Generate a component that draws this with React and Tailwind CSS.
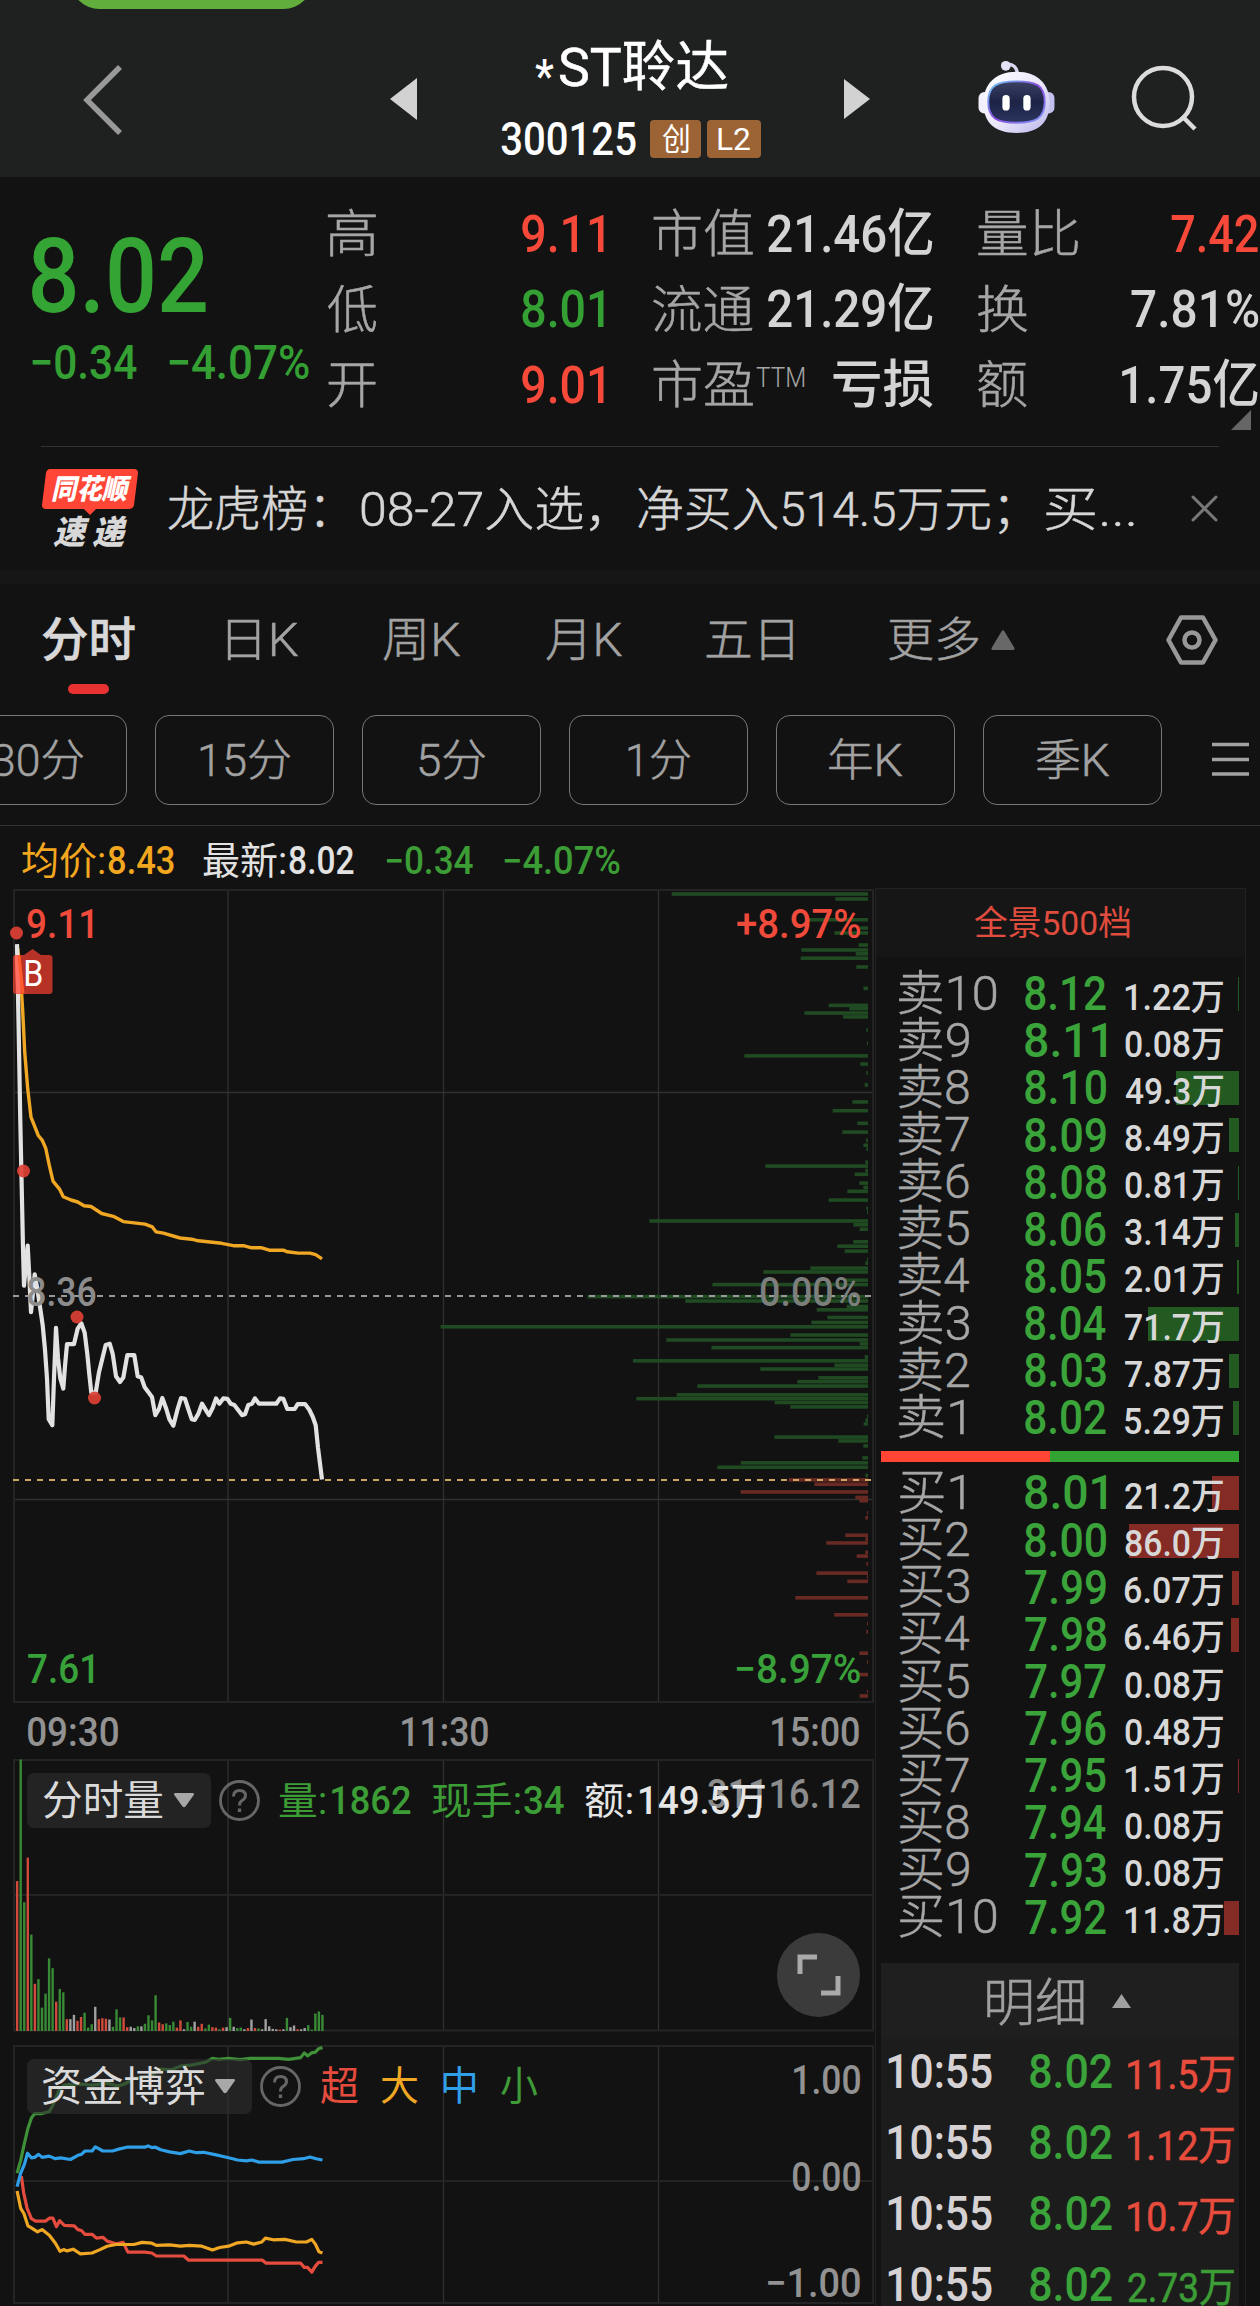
import React, { useLayoutEffect, useRef, useState } from "react";

const FONT = "font-[Roboto,'Noto_Sans_CJK_SC',sans-serif]";

/* Stretches one line of text so that its ink fills the width of its box. */
function Fit({ className = "", children }) {
  const outer = useRef(null);
  const inner = useRef(null);
  const [transform, setTransform] = useState("none");
  useLayoutEffect(() => {
    const cs = getComputedStyle(inner.current);
    const ctx = document.createElement("canvas").getContext("2d");
    ctx.font = `${cs.fontWeight} ${cs.fontSize} ${cs.fontFamily}`;
    const m = ctx.measureText(inner.current.textContent);
    const ink = m.actualBoundingBoxLeft + m.actualBoundingBoxRight;
    const s = outer.current.clientWidth / ink;
    setTransform(`translateX(${m.actualBoundingBoxLeft * s}px) scaleX(${s})`);
  }, [children]);
  return (
    <span ref={outer} className={`block shrink-0 leading-none ${className}`}>
      <span ref={inner} className="inline-block origin-left whitespace-nowrap leading-none align-top" style={{ transform }}>
        {children}
      </span>
    </span>
  );
}

const project = (pts, sx, sy, oy) =>
  pts.map(([x, y]) => `${(x / sx).toFixed(1)},${(y / sy + oy).toFixed(1)}`).join(" ");

/* ---------- header ---------- */

function Robot() {
  return (
    <svg className="ml-[107px] h-[74px] w-[79px] shrink-0" viewBox="0 0 80 76">
      <defs>
        <linearGradient id="shell" x1="0" y1="0" x2="1" y2="1">
          <stop offset="0" stopColor="#ffffff" />
          <stop offset="0.55" stopColor="#e9e6fa" />
          <stop offset="1" stopColor="#b9b5ea" />
        </linearGradient>
        <linearGradient id="rim" x1="0" y1="0" x2="1" y2="1">
          <stop offset="0" stopColor="#6fd0f5" />
          <stop offset="0.5" stopColor="#8a4be0" />
          <stop offset="1" stopColor="#7f9cf5" />
        </linearGradient>
        <linearGradient id="visor" x1="0" y1="0" x2="0" y2="1">
          <stop offset="0" stopColor="#3a4163" />
          <stop offset="0.5" stopColor="#1c2346" />
          <stop offset="1" stopColor="#2c3560" />
        </linearGradient>
      </defs>
      <path d="M29 6 Q40 4 41 16" fill="none" stroke="#d9d6f2" strokeWidth="3.5" />
      <circle cx="29" cy="7" r="5" fill="#e4e2f6" />
      <rect x="1" y="34" width="12" height="22" rx="6" fill="#f2f0fc" />
      <rect x="67" y="34" width="12" height="22" rx="6" fill="#c3c0ee" />
      <path d="M40 13 C62 13 74 26 74 45 C74 66 62 76 40 76 C18 76 6 66 6 45 C6 26 18 13 40 13Z" fill="url(#shell)" />
      <path d="M40 23 C60 23 69 27 69 44 C69 61 60 65.500 40 65.500 C20 65.500 11 61 11 44 C11 27 20 23 40 23Z" fill="url(#visor)" stroke="url(#rim)" strokeWidth="2" />
      <rect x="25.500" y="37" width="7.500" height="16" rx="3.700" fill="#fff" />
      <rect x="47" y="37" width="7.500" height="16" rx="3.700" fill="#fff" />
    </svg>
  );
}

function Header() {
  return (
    <header className="relative flex h-[177px] items-center overflow-hidden bg-[#1f2120]">
      <div className="absolute -top-[50px] left-[70px] h-[59px] w-[243px] rounded-full bg-[#62ae3c]" />
      <svg className="ml-[80px] mt-[22px] h-[72px] w-[45px]" viewBox="0 0 45 72" fill="none" stroke="#999" strokeWidth="5.5">
        <path d="M40 3 L7 36 L40 69" />
      </svg>
      <svg className="ml-[265px] mt-[20px] h-[42px] w-[27px]" viewBox="0 0 27 42" fill="#d2d2d2">
        <path d="M27 0V42L0 21Z" />
      </svg>
      <div className="ml-[84px] w-[260px] pt-[26px]">
        <div className="ml-[34px] flex text-[54px] text-white">
          <Fit className="mt-[11px] w-[19px] text-[47px] font-medium">*</Fit>
          <Fit className="ml-[6px] w-[168px] [-webkit-text-stroke:0.5px]">ST聆达</Fit>
        </div>
        <div className="mt-[17px] flex items-center text-white">
          <Fit className="w-[135px] text-[46px] font-medium">300125</Fit>
          <span className="ml-[14px] flex h-[38px] w-[51px] items-center justify-center rounded-[4px] bg-[#9c6334]">
            <Fit className="w-[27px] text-[31px]">创</Fit>
          </span>
          <span className="ml-[6px] flex h-[38px] w-[54px] items-center justify-center rounded-[4px] bg-[#9c6334]">
            <Fit className="w-[32px] text-[32px]">L2</Fit>
          </span>
        </div>
      </div>
      <svg className="ml-[83px] mt-[20px] h-[40px] w-[26px]" viewBox="0 0 26 40" fill="#d2d2d2">
        <path d="M0 0V40L26 20Z" />
      </svg>
      <div className="mt-[14px] flex">
        <Robot />
      </div>
      <svg className="ml-[75px] mt-[20px] h-[68px] w-[68px]" viewBox="0 0 68 68" fill="none" stroke="#dcdcdc" strokeWidth="4.5">
        <circle cx="32" cy="32" r="29" />
        <path d="M51 51L64 64" />
      </svg>
    </header>
  );
}

/* ---------- quote ---------- */

const UP = "text-[#f6493a]";
const DOWN = "text-[#34a034]";
const PLAIN = "text-[#d4d4d4]";

const QUOTE = [
  {
    box: "w-[276px]",
    rows: [
      ["高", "w-[48px]", "9.11", `w-[82px] ${UP}`],
      ["低", "w-[48px]", "8.01", `w-[82px] ${DOWN}`],
      ["开", "w-[48px]", "9.01", `w-[82px] ${UP}`],
    ],
  },
  {
    box: "ml-[49px] w-[280px]",
    rows: [
      ["市值", "w-[100px]", "21.46亿", `w-[165px] ${PLAIN}`],
      ["流通", "w-[100px]", "21.29亿", `w-[165px] ${PLAIN}`],
      ["市盈", "w-[100px]", "亏损", `w-[100px] ${PLAIN}`],
    ],
  },
  {
    box: "ml-[45px] w-[280px]",
    rows: [
      ["量比", "w-[100px]", "7.42", `w-[87px] ${UP}`],
      ["换", "w-[49px]", "7.81%", `w-[127px] ${PLAIN}`],
      ["额", "w-[49px]", "1.75亿", `w-[136px] ${PLAIN}`],
    ],
  },
];

function Quote() {
  return (
    <section className="relative flex h-[269px]">
      <div className="w-[328px] pl-[32px] pt-[48px]">
        <Fit className="w-[174px] text-[103px] font-medium text-[#34a534]">8.02</Fit>
        <div className="mt-[11px] flex gap-[32px] text-[48px] font-medium text-[#34a034]">
          <Fit className="w-[105px]">−0.34</Fit>
          <Fit className="w-[140px]">−4.07%</Fit>
        </div>
      </div>
      {QUOTE.map((col, i) => (
        <div key={i} className={`pt-[20px] ${col.box}`}>
          {col.rows.map(([label, lw, value, vw]) => (
            <div key={label} className="flex h-[75.5px] items-center">
              <Fit className={`text-[51px] font-light text-[#a6a6a6] [-webkit-text-stroke:0.5px] ${lw}`}>{label}</Fit>
              {label === "市盈" && (
                <Fit className="mb-[14px] ml-[3px] w-[48px] text-[27px] font-light text-[#a6a6a6]">TTM</Fit>
              )}
              <Fit className={`ml-auto text-[52px] font-medium ${vw}`}>{value}</Fit>
            </div>
          ))}
        </div>
      ))}
      <svg className="absolute right-[9px] top-[233px] h-[20px] w-[20px]" viewBox="0 0 20 20" fill="#666">
        <path d="M20 0V20H0Z" />
      </svg>
    </section>
  );
}

function News() {
  return (
    <section className="mx-[41px] flex h-[124px] items-start border-t border-[#333]">
      <div className="mt-[22px] w-[98px]">
        <div className="relative h-[40px]">
          <svg className="absolute left-0 top-0 h-[47px] w-[98px]" viewBox="0 0 98 47" fill="#ff4636">
            <path d="M9 0H93Q97 0 97 4L93 36Q92 40 88 40H55L49 46L43 40H5Q1 40 1 36L5 4Q6 0 9 0Z" />
          </svg>
          <div className="relative pl-[11px] pt-[7px]">
            <Fit className="w-[75px] text-[28px] font-black italic text-white">同花顺</Fit>
          </div>
        </div>
        <div className="ml-[12px] mt-[7px] flex gap-[7px] text-[33px] font-black italic text-[#d8d8d8]">
          <Fit className="w-[32px]">速</Fit>
          <Fit className="w-[32px]">递</Fit>
        </div>
      </div>
      <div className="ml-[29px] mt-[39px] flex text-[48px] font-light text-[#d6d6d6] [-webkit-text-stroke:0.5px]">
        <Fit className="w-[156px]">龙虎榜：</Fit>
        <Fit className="ml-[37px] w-[239px]">08-27入选，</Fit>
        <Fit className="ml-[38px] w-[370px]">净买入514.5万元；</Fit>
        <Fit className="ml-[37px] w-[89px]">买...</Fit>
      </div>
      <svg className="ml-auto mr-[1px] mt-[48px] h-[27px] w-[27px]" viewBox="0 0 27 27" stroke="#777" strokeWidth="3" strokeLinecap="round">
        <path d="M2 2L25 25M25 2L2 25" />
      </svg>
    </section>
  );
}

function Tabs() {
  return (
    <nav className="flex h-[131px] items-start pl-[42px] pt-[32px] text-[47px] font-light text-[#a2a2a2] [-webkit-text-stroke:0.5px]">
      <div className="flex flex-col items-center">
        <Fit className="w-[93px] font-medium text-[#d8d8d8]">分时</Fit>
        <span className="mt-[21px] h-[10px] w-[41px] rounded-full bg-[#e83131]" />
      </div>
      <Fit className="ml-[92px] w-[71px]">日K</Fit>
      <Fit className="ml-[85px] w-[77px]">周K</Fit>
      <Fit className="ml-[86px] w-[76px]">月K</Fit>
      <Fit className="ml-[84px] w-[87px]">五日</Fit>
      <Fit className="ml-[96px] w-[90px]">更多</Fit>
      <svg className="ml-[12px] mt-[14px] h-[20px] w-[24px]" viewBox="0 0 24 20" fill="#686868">
        <path d="M10.500 1.500Q12 -1 13.500 1.500L23.500 18Q24 20 22 20H2Q0 20 .5 18Z" />
      </svg>
      <svg className="-mt-px ml-[151px] h-[50px] w-[52px]" viewBox="0 0 52 50" fill="none" stroke="#989898" strokeWidth="4.5" strokeLinejoin="round">
        <path d="M15 2.500H37L49.500 25L37 47.500H15L2.500 25Z" />
        <circle cx="26" cy="25" r="7.500" />
      </svg>
    </nav>
  );
}

const PERIODS = [
  ["30分", "w-[90px]"],
  ["15分", "w-[90px]"],
  ["5分", "w-[66px]"],
  ["1分", "w-[62px]"],
  ["年K", "w-[73px]"],
  ["季K", "w-[73px]"],
];

function Periods() {
  return (
    <div className="flex h-[111px] items-start overflow-hidden border-b border-[#333]">
      <div className="-ml-[52px] flex shrink-0 gap-[28px]">
        {PERIODS.map(([name, w]) => (
          <span key={name} className="flex h-[90px] w-[179px] items-center justify-center rounded-[14px] border border-[#777] pt-[2px] text-[44px] font-light text-[#a2a2a2] [-webkit-text-stroke:0.5px]">
            <Fit className={w}>{name}</Fit>
          </span>
        ))}
      </div>
      <svg className="ml-[50px] mt-[27px] h-[36px] w-[37px] shrink-0" viewBox="0 0 37 36" stroke="#a2a2a2" strokeWidth="3.6">
        <path d="M0 2.500H37M0 17.500H37M0 32H37" />
      </svg>
    </div>
  );
}

/* ---------- price chart ---------- */

const PRICE = [
  [51, 206], [56, 420], [61, 640], [65, 800], [69, 950], [72, 1043], [83, 945], [88, 1020], [93, 1108], [99, 1060],
  [104, 1015], [112, 1050], [120, 1095], [128, 1140], [135, 1200], [141, 1270], [146, 1370], [157, 1385], [162, 1270], [168, 1146],
  [174, 1220], [181, 1270], [190, 1295], [195, 1240], [201, 1186], [222, 1186], [233, 1148], [244, 1135], [254, 1158], [262, 1210],
  [268, 1260], [274, 1305], [287, 1305], [297, 1255], [306, 1225], [317, 1188], [329, 1185], [338, 1210], [348, 1265], [360, 1279],
  [370, 1268], [382, 1213], [403, 1213], [413, 1265], [424, 1268], [434, 1292], [456, 1316], [466, 1360], [477, 1345], [487, 1318],
  [499, 1345], [508, 1370], [520, 1386], [532, 1348], [543, 1318], [555, 1320], [565, 1345], [575, 1370], [584, 1372], [595, 1357],
  [606, 1332], [617, 1347], [627, 1360], [638, 1342], [648, 1319], [658, 1332], [670, 1319], [682, 1320], [692, 1332], [703, 1335],
  [726, 1360], [735, 1358], [745, 1335], [756, 1332], [765, 1319], [777, 1332], [829, 1332], [840, 1319], [850, 1320], [862, 1345],
  [884, 1345], [893, 1333], [915, 1333], [928, 1347], [938, 1364], [947, 1385], [954, 1440], [966, 1518],
];
const AVERAGE = [
  [53, 215], [62, 290], [68, 370], [74, 470], [83, 560], [93, 630], [115, 675], [127, 687], [137, 706], [148, 748],
  [159, 787], [179, 807], [190, 825], [213, 833], [233, 838], [252, 847], [273, 849], [305, 866], [340, 873], [370, 886],
  [435, 892], [457, 899], [468, 911], [490, 914], [540, 926], [575, 929], [595, 933], [665, 939], [700, 945], [730, 945],
  [755, 950], [785, 950], [808, 956], [850, 956], [862, 960], [895, 963], [930, 963], [947, 967], [966, 977],
];
const DEPTH_ASK = [
  [62, 725], [71, 1216], [109, 1135], [124, 1290], [133, 1213], [155, 1286], [164, 1114], [171, 1277], [179, 1112], [195, 1279],
  [234, 1300], [265, 1196], [271, 1258], [279, 1123], [286, 1239], [310, 1309], [334, 1311], [357, 943], [372, 1291], [388, 1309],
  [410, 1304], [441, 1267], [457, 1208], [480, 1282], [496, 1237], [511, 1308], [520, 1300], [527, 1309], [551, 1306], [558, 1006],
  [566, 1306], [573, 1274], [589, 1288], [597, 1300], [604, 1252], [620, 1196], [635, 1309], [642, 1311], [658, 658], [665, 1270],
  [673, 1289], [696, 1270], [704, 1222], [713, 1244], [728, 1311], [735, 1306], [744, 1141], [751, 1000], [766, 1245], [774, 847],
  [796, 472], [804, 766], [814, 1250], [820, 1160], [834, 1192], [843, 1144], [851, 32], [866, 1081], [875, 709], [882, 1289],
  [889, 844], [906, 1304], [913, 609], [921, 1213], [928, 991], [944, 1165], [951, 1102], [959, 802], [975, 740], [982, 619],
  [989, 1034], [997, 1081], [1014, 1311], [1021, 1306], [1028, 1301], [1052, 1033], [1059, 1225], [1068, 1300], [1090, 1297],
  [1099, 932], [1107, 862], [1122, 1306],
];
const DEPTH_BID = [
  [1130, 1076], [1138, 1153], [1152, 932], [1162, 1276], [1168, 1288], [1190, 1311], [1199, 1306], [1231, 1246], [1238, 1306],
  [1245, 1189], [1262, 1306], [1269, 1280], [1283, 1309], [1300, 1159], [1307, 1311], [1315, 1252], [1345, 1096], [1376, 1213],
  [1392, 1311], [1407, 1309], [1446, 1288], [1462, 1311], [1485, 1288], [1516, 1311], [1524, 1289],
];

function Depth({ rows, fill }) {
  return rows.map(([y, x]) => (
    <rect key={y} x={430 + x / 3} y={860 + y / 1.823 - 1.8} width={(1314 - x) / 3} height="3.6" fill={fill} />
  ));
}

function PriceChart() {
  return (
    <div className="relative h-[870px]">
      <svg className="block h-[820px] w-[875px]" viewBox="0 888 875 820" fill="none">
        <path d="M228 890V1702M443.500 890V1702M658.500 890V1702M13 1092.500H874M13 1499.500H874" stroke="#303030" strokeWidth="1.3" />
        <rect x="14" y="890" width="859" height="812" stroke="#242424" strokeWidth="2" />
        <Depth rows={DEPTH_ASK} fill="#1f4a22" />
        <Depth rows={DEPTH_BID} fill="#692a23" />
        <path d="M13 1296H872" stroke="#999" strokeWidth="1.8" strokeDasharray="6 6" />
        <path d="M13 1480H872" stroke="#cfa565" strokeWidth="1.8" strokeDasharray="6 6" />
        <polyline points={project(AVERAGE, 3, 2.45, 860)} stroke="#efa724" strokeWidth="3.4" strokeLinejoin="round" />
        <polyline points={project(PRICE, 3, 2.45, 860)} stroke="#e2e2e2" strokeWidth="4.2" strokeLinejoin="round" />
        <path d="M24 955L32.500 949L41 955H49Q52.500 955 52.500 958V991Q52.500 994 49 994H16Q13 994 13 991V958Q13 955 16 955Z" fill="#e0392c" fillOpacity="0.8" />
        <path d="M17 955.500L18.500 993.500" stroke="#ff6e60" strokeWidth="4.500" />
        <path d="M19 955.500L23 993.500" stroke="#ff5a2c" strokeWidth="3" />
        {[[16.5, 933], [23.5, 1171], [77, 1317], [94.5, 1398]].map(([x, y]) => (
          <circle key={y} cx={x} cy={y} r="6.500" fill="#dc4033" fillOpacity="0.92" />
        ))}
      </svg>
      <div className="absolute left-[25px] top-[68px]"><Fit className="w-[17px] text-[36px] text-white">B</Fit></div>
      <div className="absolute left-[27px] top-[17px]"><Fit className="w-[65px] text-[40px] font-medium text-[#f04a3b]">9.11</Fit></div>
      <div className="absolute left-[28px] top-[385px]"><Fit className="w-[68px] text-[40px] font-medium text-[#8c8c8c]">8.36</Fit></div>
      <div className="absolute left-[28px] top-[762px]"><Fit className="w-[65px] text-[40px] font-medium text-[#39a13a]">7.61</Fit></div>
      <div className="absolute left-[737px] top-[17px]"><Fit className="w-[123px] text-[40px] font-medium text-[#f04a3b]">+8.97%</Fit></div>
      <div className="absolute left-[761px] top-[385px]"><Fit className="w-[99px] text-[40px] font-medium text-[#7c7f7c]">0.00%</Fit></div>
      <div className="absolute left-[737px] top-[762px]"><Fit className="w-[123px] text-[40px] font-medium text-[#39a13a]">−8.97%</Fit></div>
      <div className="flex pl-[28px] pt-[5px] text-[40px] font-medium text-[#929292]">
        <Fit className="w-[90px]">09:30</Fit>
        <Fit className="ml-[284px] w-[86px]">11:30</Fit>
        <Fit className="ml-[284px] w-[87px]">15:00</Fit>
      </div>
    </div>
  );
}

/* ---------- volume ---------- */

const VOLUME =
  "r567 g281 g617 r512 g693 r809 g798 g865 g832 g749 g772 r851 g821 g829 r892 w892 w882 r896 r887 g877 g912 g904 w863 r892 r890 r891 w893 g910 g869 g888 r888 r911 w910 w913 g909 w909 g903 g883 g895 g836 r900 r904 g902 g906 g898 r912 r895 w916 g899 g910 w898 r910 r903 g914 g905 r911 r912 g916 r912 w911 g889 w910 g913 g912 w916 r913 w893 r913 g914 w916 w892 w909 w915 w916 r917 w916 g889 w911 w907 r916 w916 w913 g906 g917 g879 g874 g882".split(" ");
const BAR = { r: "#cf4b3c", g: "#388a35", w: "#a0a0a0" };

function Selector({ name, width }) {
  return (
    <>
      <span className="flex h-[55px] items-center rounded-[7px] bg-[#2e2e2e]/60 pl-[16px] pr-[17px] text-[41px] text-[#dadada]">
        <Fit className={`mt-[2px] ${width}`}>{name}</Fit>
        <svg className="ml-[11px] h-[15px] w-[20px]" viewBox="0 0 20 15" fill="#a8a8a8">
          <path d="M1 0H19Q21 1 19 3L11.500 13.500Q10 15 8.500 13.500L1 3Q-1 1 1 0Z" />
        </svg>
      </span>
      <svg className="ml-[8px] h-[41px] w-[41px]" viewBox="0 0 41 41" fill="none" stroke="#666">
        <circle cx="20.500" cy="20.500" r="19" strokeWidth="2.8" />
        <path d="M14.500 16.500Q14.500 10.500 20.500 10.500Q26.500 10.500 26.500 15.500Q26.500 18.500 23 20.500Q20.500 22 20.500 25.500" strokeWidth="3" />
        <path d="M20.500 28.500V32" strokeWidth="3.4" />
      </svg>
    </>
  );
}

function VolumeChart() {
  return (
    <div className="relative h-[286px]">
      <svg className="block h-[276px] w-[875px]" viewBox="0 1758 875 276" fill="none">
        <path d="M228 1760V2031M443.500 1760V2031M658.500 1760V2031" stroke="#303030" strokeWidth="1.3" />
        <path d="M13 1895H874" stroke="#242424" strokeWidth="2" />
        <rect x="14" y="1760" width="859" height="270.500" stroke="#242424" strokeWidth="2" />
        {VOLUME.map((v, i) => {
          const h = (920 - Number(v.slice(1))) / 2.354;
          return <rect key={i} x={(48 + i * 9.94) / 2.8 - 1.2} y={2031 - h} width="2.4" height={h} fill={BAR[v[0]]} />;
        })}
      </svg>
      <div className="absolute left-[708px] top-[17px]"><Fit className="w-[152px] text-[40px] font-medium text-[#8c8c8c]">31116.12</Fit></div>
      <div className="absolute left-[27px] top-[15px] flex items-center text-[38px] text-[#3c9c36]">
        <Selector name="分时量" width="w-[120px]" />
        <Fit className="ml-[19px] w-[46px]">量:</Fit>
        <Fit className="ml-[7px] w-[79px] font-medium">1862</Fit>
        <Fit className="ml-[21px] w-[88px]">现手:</Fit>
        <Fit className="ml-[4px] w-[40px] font-medium">34</Fit>
        <Fit className="ml-[21px] w-[47px] text-[#e6e6e6]">额:</Fit>
        <Fit className="ml-[8px] w-[125px] font-medium text-[#e6e6e6]">149.5万</Fit>
      </div>
      <div className="absolute left-[777px] top-[175px] flex h-[84px] w-[83px] items-center justify-center rounded-full bg-[#3b3b3b]">
        <svg className="h-[42px] w-[44px]" viewBox="0 0 44 42" fill="none" stroke="#aaa" strokeWidth="5">
          <path d="M3 20V3H20M41 22V39H24" />
        </svg>
      </div>
    </div>
  );
}

/* ---------- capital flow ---------- */

const FLOW = [
  {
    color: "#3f9138",
    pts: [[48, 1255], [58, 1225], [67, 1190], [78, 1150], [88, 1125], [97, 1115], [115, 1115], [138, 1110], [148, 1095], [165, 1060], [180, 1048], [215, 1045], [260, 1048], [300, 1043], [330, 1050], [350, 1045], [375, 1032], [420, 1028], [438, 1015], [450, 1010], [480, 1012], [505, 1003], [540, 1000], [575, 994], [595, 985], [612, 987], [640, 985], [672, 988], [700, 985], [780, 985], [808, 987], [842, 983], [852, 972], [861, 979], [872, 972], [883, 970], [892, 962], [903, 959]],
  },
  {
    color: "#e54c3e",
    pts: [[60, 1262], [66, 1300], [76, 1338], [88, 1362], [100, 1368], [128, 1368], [138, 1361], [148, 1361], [158, 1381], [167, 1367], [180, 1378], [208, 1379], [218, 1388], [228, 1390], [238, 1399], [258, 1399], [270, 1408], [288, 1406], [300, 1415], [325, 1421], [345, 1418], [358, 1441], [405, 1441], [425, 1443], [438, 1450], [515, 1450], [528, 1460], [735, 1460], [745, 1467], [842, 1467], [852, 1477], [861, 1477], [873, 1488], [882, 1475], [892, 1465], [903, 1465]],
  },
  {
    color: "#efa724",
    pts: [[48, 1297], [58, 1338], [67, 1350], [78, 1379], [88, 1384], [105, 1393], [118, 1388], [138, 1401], [155, 1420], [168, 1439], [178, 1435], [188, 1438], [205, 1434], [225, 1445], [258, 1443], [280, 1435], [300, 1427], [325, 1423], [375, 1423], [398, 1418], [425, 1420], [438, 1425], [475, 1424], [505, 1427], [530, 1425], [565, 1427], [595, 1436], [615, 1430], [640, 1427], [665, 1419], [690, 1417], [710, 1422], [733, 1417], [743, 1408], [765, 1412], [798, 1411], [830, 1417], [858, 1417], [873, 1411], [883, 1422], [893, 1440], [903, 1443]],
  },
  {
    color: "#2f9fe8",
    pts: [[48, 1287], [58, 1255], [68, 1235], [77, 1208], [88, 1219], [97, 1218], [108, 1211], [118, 1218], [138, 1215], [155, 1221], [170, 1219], [197, 1223], [218, 1213], [228, 1211], [238, 1203], [258, 1203], [267, 1193], [288, 1203], [315, 1203], [335, 1198], [355, 1194], [405, 1194], [415, 1191], [425, 1195], [435, 1194], [450, 1200], [475, 1205], [505, 1209], [530, 1203], [550, 1207], [570, 1206], [605, 1212], [640, 1219], [665, 1224], [690, 1226], [705, 1224], [725, 1229], [790, 1229], [820, 1223], [850, 1221], [868, 1217], [885, 1221], [903, 1224]],
  },
];

function FlowChart() {
  return (
    <div className="relative h-[262px]">
      <svg className="block h-[262px] w-[875px]" viewBox="0 2044 875 262" fill="none">
        <path d="M228 2046V2303M443.500 2046V2303M658.500 2046V2303" stroke="#303030" strokeWidth="1.3" />
        <path d="M13 2181H874" stroke="#242424" strokeWidth="2" />
        <rect x="14" y="2046" width="859" height="257" stroke="#242424" strokeWidth="2" />
        {FLOW.map((l) => (
          <polyline key={l.color} points={project(l.pts, 2.8, 2.354, 1640)} stroke={l.color} strokeWidth="3.2" strokeLinejoin="round" />
        ))}
      </svg>
      <div className="absolute right-[15px] top-[17px] flex flex-col items-end text-[40px] font-medium text-[#929292]">
        <Fit className="w-[66px]">1.00</Fit>
        <Fit className="mt-[57px] w-[67px]">0.00</Fit>
        <Fit className="mt-[66px] w-[92px]">−1.00</Fit>
      </div>
      <div className="absolute left-[27px] top-[15px] flex items-center text-[40px]">
        <Selector name="资金博弈" width="w-[161px]" />
        <Fit className="ml-[20px] w-[37px] text-[#e54c3e]">超</Fit>
        <Fit className="ml-[23px] w-[37px] text-[#efa724]">大</Fit>
        <Fit className="ml-[25px] w-[33px] text-[#2f9fe8]">中</Fit>
        <Fit className="ml-[25px] w-[37px] text-[#3f9a38]">小</Fit>
      </div>
    </div>
  );
}

/* ---------- order book ---------- */

const ASKS = [
  ["卖10", "8.12", "1.22万", "w-px"],
  ["卖9", "8.11", "0.08万", "w-0"],
  ["卖8", "8.10", "49.3万", "w-[63px]"],
  ["卖7", "8.09", "8.49万", "w-[10px]"],
  ["卖6", "8.08", "0.81万", "w-px"],
  ["卖5", "8.06", "3.14万", "w-[4px]"],
  ["卖4", "8.05", "2.01万", "w-[2px]"],
  ["卖3", "8.04", "71.7万", "w-[91px]"],
  ["卖2", "8.03", "7.87万", "w-[10px]"],
  ["卖1", "8.02", "5.29万", "w-[6px]"],
];
const BIDS = [
  ["买1", "8.01", "21.2万", "w-[27px]"],
  ["买2", "8.00", "86.0万", "w-[110px]"],
  ["买3", "7.99", "6.07万", "w-[7px]"],
  ["买4", "7.98", "6.46万", "w-[8px]"],
  ["买5", "7.97", "0.08万", "w-0"],
  ["买6", "7.96", "0.48万", "w-0"],
  ["买7", "7.95", "1.51万", "w-px"],
  ["买8", "7.94", "0.08万", "w-0"],
  ["买9", "7.93", "0.08万", "w-0"],
  ["买10", "7.92", "11.8万", "w-[15px]"],
];

function Level({ row, bar }) {
  const [name, price, size, w] = row;
  const labelWidth = name.endsWith("10") ? "w-[97px]" : name.endsWith("1") ? "w-[65px]" : "w-[70px]";
  return (
    <div className="relative flex h-[47.15px] items-center pl-[23px]">
      <span className={`absolute right-[6px] top-[7px] h-[34px] ${bar} ${w}`} />
      <span className="relative w-[126px]">
        <Fit className={`text-[48px] font-light text-[#a6a6a6] [-webkit-text-stroke:0.5px] ${labelWidth}`}>{name}</Fit>
      </span>
      <Fit className="relative mt-px w-[81px] text-[48px] font-medium text-[#3aa33a]">{price}</Fit>
      <span className="relative ml-[19px] pt-[8px]">
        <Fit className="w-[98px] text-[36px] font-medium text-[#d8d8d8]">{size}</Fit>
      </span>
    </div>
  );
}

const TRADES = [
  ["11.5万", "text-[#e84c3d]"],
  ["1.12万", "text-[#e84c3d]"],
  ["10.7万", "text-[#e84c3d]"],
  ["2.73万", "text-[#3c9c36]"],
];

function OrderBook() {
  return (
    <aside className="mt-[62px] h-[1418px] w-[371px] overflow-hidden border-x border-t border-[#222]">
      <div className="flex h-[68px] items-center justify-center bg-[#161616] pr-[18px]">
        <Fit className="w-[156px] text-[34px] text-[#e04c3e]">全景500档</Fit>
      </div>
      <div className="pt-[13px]">{ASKS.map((r) => <Level key={r[0]} row={r} bar="bg-[#225a22]" />)}</div>
      <div className="ml-[5px] mt-[10px] flex h-[11px] w-[358px]">
        <span className="w-[169px] bg-[#ff4534]" />
        <span className="flex-1 bg-[#33a433]" />
      </div>
      <div className="pt-[7px]">{BIDS.map((r) => <Level key={r[0]} row={r} bar="bg-[#852b25]" />)}</div>
      <div className="ml-[5px] mt-[22px] w-[358px] bg-[#1c1c1c]">
        <div className="flex h-[76px] items-center bg-[#1f1f1f] pl-[106px]">
          <Fit className="mt-[5px] w-[97px] text-[51px] font-light text-[#a0a0a0] [-webkit-text-stroke:0.5px]">明细</Fit>
          <svg className="ml-[28px] h-[14px] w-[19px]" viewBox="0 0 19 14" fill="#a0a0a0">
            <path d="M9.500 0L19 14H0Z" />
          </svg>
        </div>
        {TRADES.map(([size, color]) => (
          <div key={size} className="flex h-[71px] items-start pl-[7px] pt-[9px]">
            <Fit className="w-[104px] text-[48px] font-medium text-[#d6d2d4]">10:55</Fit>
            <Fit className="ml-[38px] w-[82px] text-[48px] font-medium text-[#3aa33a]">8.02</Fit>
            <Fit className={`ml-[16px] mt-[7px] w-[106px] text-[41px] [-webkit-text-stroke:0.6px] ${color}`}>{size}</Fit>
          </div>
        ))}
      </div>
    </aside>
  );
}

export default function App() {
  return (
    <div className={`h-[2306px] w-[1260px] overflow-hidden bg-[#121212] ${FONT}`}>
      <Header />
      <Quote />
      <News />
      <div className="h-[14px] bg-[#161616]" />
      <Tabs />
      <Periods />
      <div className="flex">
        <div className="w-[875px] shrink-0">
          <div className="flex h-[62px] items-center pl-[22px] pt-[8px] text-[38px]">
            <Fit className="w-[82px] text-[#f2a71f]">均价:</Fit>
            <Fit className="ml-[4px] w-[66px] font-medium text-[#f2a71f]">8.43</Fit>
            <Fit className="ml-[29px] w-[82px] text-[#e2e2e2]">最新:</Fit>
            <Fit className="ml-[4px] w-[65px] font-medium text-[#e2e2e2]">8.02</Fit>
            <Fit className="ml-[32px] w-[87px] font-medium text-[#3c9c36]">−0.34</Fit>
            <Fit className="ml-[31px] w-[116px] font-medium text-[#3c9c36]">−4.07%</Fit>
          </div>
          <PriceChart />
          <VolumeChart />
          <FlowChart />
        </div>
        <OrderBook />
      </div>
    </div>
  );
}
